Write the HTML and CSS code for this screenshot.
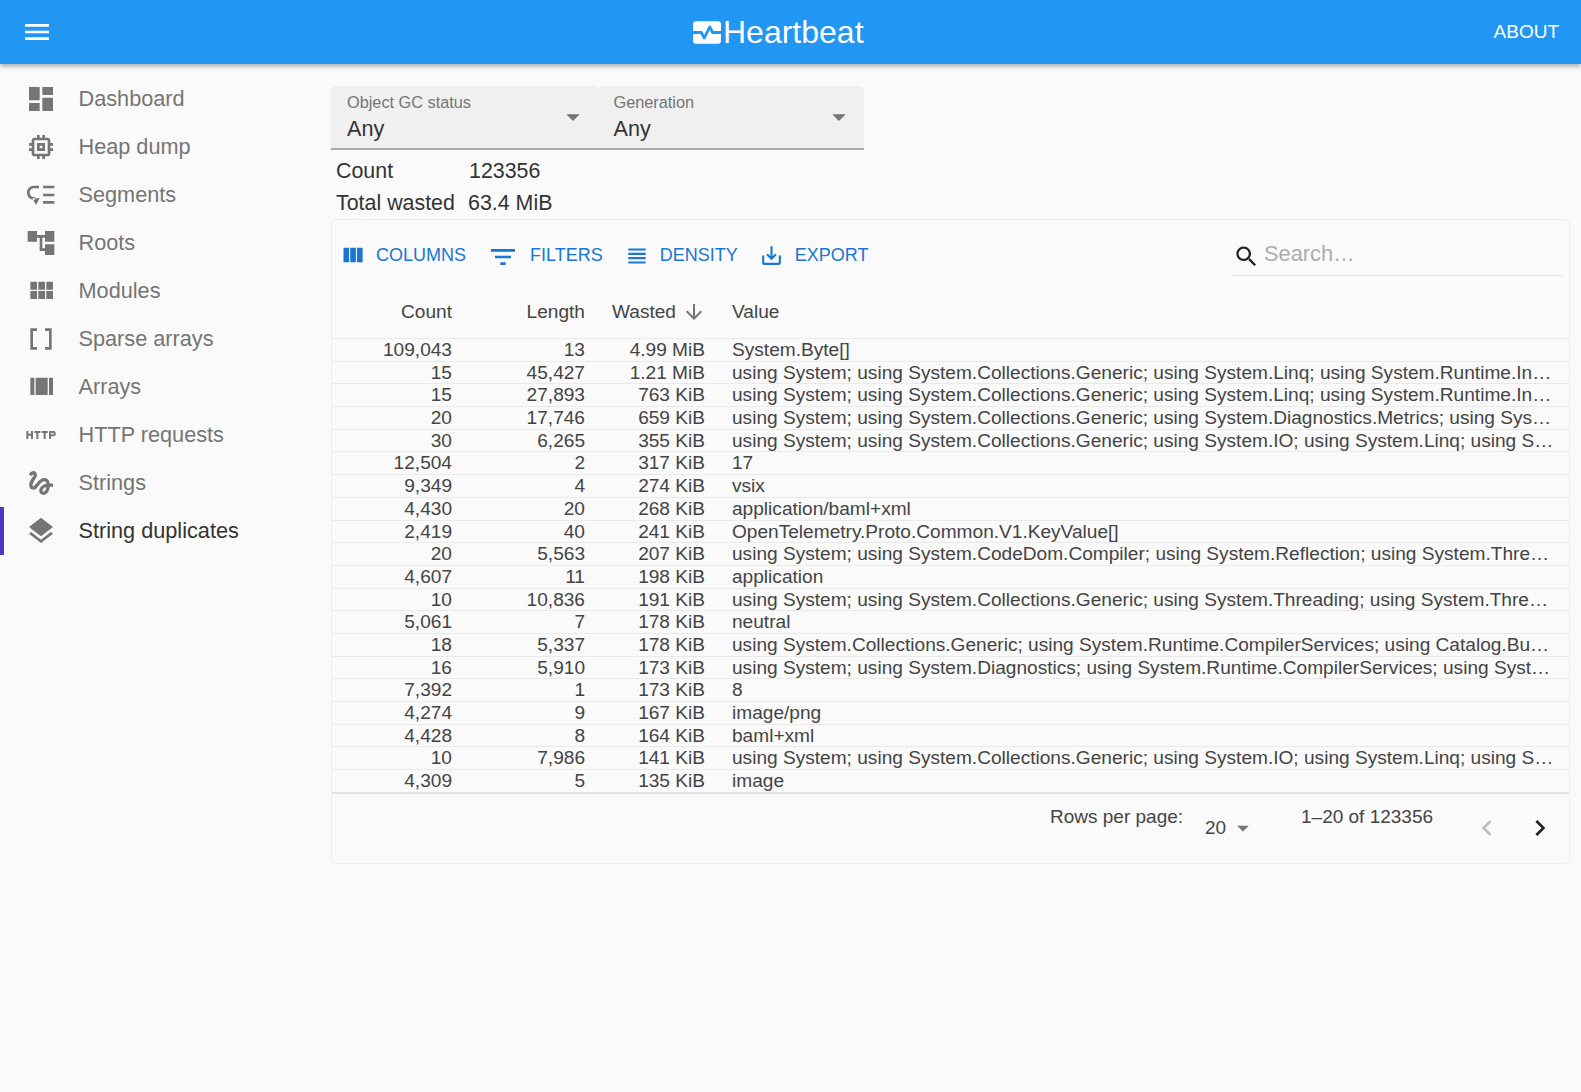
FILE: index.html
```html
<!DOCTYPE html>
<html lang="en">
<head>
    <meta charset="UTF-8">
    <title>Heartbeat</title>
    <link rel="stylesheet" href="styles.css">
</head>
<body>
    <header class="app-bar">
        <svg class="menu-icon" viewBox="0 0 24 24"><path d="M3 18h18v-2H3v2zm0-5h18v-2H3v2zm0-7v2h18V6H3z"/></svg>
        <div class="brand">
            <svg class="brand-icon" viewBox="2 4 20 16"><path d="M15.11 12.45L14 10.24l-3.11 6.21c-.16.34-.51.55-.89.55s-.73-.21-.89-.55L7.38 13H2v5c0 1.1.9 2 2 2h16c1.1 0 2-.9 2-2v-5h-6c-.38 0-.73-.21-.89-.55zM20 4H4c-1.1 0-2 .9-2 2v5h6c.38 0 .73.21.89.55L10 13.76l3.11-6.21c.34-.68 1.45-.68 1.79 0L16.62 11H22V6c0-1.1-.9-2-2-2z"/></svg>
            <span>Heartbeat</span>
        </div>
        <span class="about">ABOUT</span>
    </header>

    <div class="layout">
        <nav class="sidebar">
            <a class="nav-item"><svg viewBox="0 0 24 24"><path d="M3 13h8V3H3v10zm0 8h8v-6H3v6zm10 0h8V11h-8v10zm0-18v6h8V3h-8z"/></svg>Dashboard</a>
            <a class="nav-item"><svg viewBox="0 0 24 24"><path d="M15 9H9v6h6V9zm-2 4h-2v-2h2v2zm8-2V9h-2V7c0-1.1-.9-2-2-2h-2V3h-2v2h-2V3H9v2H7c-1.1 0-2 .9-2 2v2H3v2h2v2H3v2h2v2c0 1.1.9 2 2 2h2v2h2v-2h2v2h2v-2h2c1.1 0 2-.9 2-2v-2h2v-2h-2v-2h2zm-4 6H7V7h10v10z"/></svg>Heap dump</a>
            <a class="nav-item"><svg viewBox="0 0 24 24"><path d="M10.500 5H6.500C3.600 5 1.500 7.300 1.500 10.300S3.600 15.500 6.500 15.500H7.500V13.500H6.500C4.800 13.500 3.500 12.100 3.500 10.300S4.800 7 6.500 7H10.500zM5.500 14.500h5.500l-2.750 5zM13.500 5h8.500v2h-8.500zM13.500 11h8.500v2h-8.500zM13.500 16.500h8.500v2h-8.500z"/></svg>Segments</a>
            <a class="nav-item"><svg viewBox="0 0 24 24"><path d="M22 11V3h-7v3H9V3H2v8h7V8h2v10h4v3h7v-8h-7v3h-2V8h2v3z"/></svg>Roots</a>
            <a class="nav-item"><svg viewBox="0 0 24 24"><path d="M4 11h5V5H4v6zm0 7h5v-6H4v6zm6 0h5v-6h-5v6zm6 0h5v-6h-5v6zm-6-7h5V5h-5v6zm6-6v6h5V5h-5z"/></svg>Modules</a>
            <a class="nav-item"><svg viewBox="0 0 24 24"><path d="M15 4v2h3v12h-3v2h5V4zM4 20h5v-2H6V6h3V4H4z"/></svg>Sparse arrays</a>
            <a class="nav-item"><svg viewBox="0 0 24 24"><path d="M4 18h3V5H4v13zM18 5v13h3V5h-3zM8 18h9V5H8v13z"/></svg>Arrays</a>
            <a class="nav-item"><svg viewBox="0 0 24 24"><path d="M4.500 11h-2V9H1v6h1.500v-2.500h2V15H6V9H4.500v2zm2.500-.5h1.500V15H10v-4.500h1.500V9H7v1.500zm5.500 0H14V15h1.500v-4.500H17V9h-4.500v1.500zm9-1.500H18v6h1.500v-2h2c.8 0 1.500-.7 1.500-1.500v-1c0-.8-.7-1.500-1.500-1.500zm0 2.500h-2v-1h2v1z"/></svg>HTTP requests</a>
            <a class="nav-item"><svg viewBox="0 0 24 24"><path d="M4.590 6.890c.7-.71 1.400-1.350 1.710-1.220.5.2 0 1.030-.3 1.520-.25.42-2.860 3.890-2.860 6.310 0 1.280.48 2.340 1.340 2.980.75.56 1.740.73 2.640.46 1.070-.31 1.950-1.400 3.060-2.770 1.210-1.490 2.830-3.440 4.080-3.440 1.630 0 1.650 1.010 1.760 1.790-3.780.64-5.380 3.670-5.380 5.370 0 1.700 1.440 3.090 3.210 3.090 1.630 0 4.290-1.330 4.690-6.100H21v-2.500h-2.470c-.15-1.650-1.090-4.200-4.030-4.200-2.250 0-4.180 1.910-4.940 2.840-.58.73-2.060 2.480-2.290 2.720-.25.3-.68.84-1.110.84-.45 0-.72-.83-.36-1.920.35-1.090 1.400-2.860 1.850-3.520.78-1.140 1.300-1.920 1.300-3.280C8.950 3.690 7.310 3 6.440 3 5.120 3 3.970 4 3.720 4.250c-.36.36-.66.66-.88.93l1.750 1.710zm9.290 11.660c-.31 0-.74-.26-.74-.72 0-.6.73-2.200 2.870-2.760-.3 2.690-1.430 3.480-2.130 3.480z"/></svg>Strings</a>
            <a class="nav-item active"><svg viewBox="0 0 24 24"><path d="M11.990 18.540l-7.370-5.730L3 14.070l9 7 9-7-1.630-1.270-7.380 5.740zM12 16l7.360-5.730L21 9l-9-7-9 7 1.630 1.270L12 16z"/></svg>String duplicates</a>
        </nav>

        <main class="content">
            <div class="filters">
                <div class="select">
                    <div class="select-label">Object GC status</div>
                    <div class="select-value">Any</div>
                    <svg class="select-arrow" viewBox="0 0 24 24"><path d="M7 10l5 5 5-5z"/></svg>
                </div>
                <div class="select">
                    <div class="select-label">Generation</div>
                    <div class="select-value">Any</div>
                    <svg class="select-arrow" viewBox="0 0 24 24"><path d="M7 10l5 5 5-5z"/></svg>
                </div>
            </div>

            <div class="stats">
                <span>Count</span><span class="stat-count">123356</span>
                <span>Total wasted</span><span>63.4 MiB</span>
            </div>

            <section class="grid-card">
                <div class="toolbar">
                    <a class="tool tool-columns"><svg viewBox="0 0 24 24"><path d="M10 18h5V5h-5v13zm-6 0h5V5H4v13zM16 5v13h5V5h-5z"/></svg>COLUMNS</a>
                    <a class="tool tool-filters"><svg viewBox="0 0 24 24"><path d="M10 18h4v-2h-4v2zM3 6v2h18V6H3zm3 7h12v-2H6v2z"/></svg>FILTERS</a>
                    <a class="tool tool-density"><svg viewBox="0 0 24 24"><path d="M4 15h16v-2H4v2zm0 4h16v-2H4v2zm0-8h16V9H4v2zm0-6v2h16V5H4z"/></svg>DENSITY</a>
                    <a class="tool tool-export"><svg viewBox="0 0 24 24"><path d="M19 12v7H5v-7H3v7c0 1.100.9 2 2 2h14c1.100 0 2-.9 2-2v-7h-2zm-6 .67l2.590-2.580L17 11.500l-5 5-5-5 1.410-1.410L11 12.670V3h2z"/></svg>EXPORT</a>
                    <div class="search">
                        <svg viewBox="0 0 24 24"><path d="M15.500 14h-.79l-.28-.27C15.410 12.590 16 11.110 16 9.500 16 5.910 13.090 3 9.500 3S3 5.910 3 9.500 5.910 16 9.500 16c1.610 0 3.090-.59 4.230-1.570l.27.28v.79l5 4.990L20.490 19l-4.990-5zm-6 0C7.010 14 5 11.990 5 9.500S7.010 5 9.500 5 14 7.010 14 9.500 11.990 14 9.500 14z"/></svg>
                        <span>Search…</span>
                    </div>
                </div>

                <div class="row head">
                    <span class="num">Count</span>
                    <span class="num">Length</span>
                    <span class="sorted">Wasted<svg viewBox="0 0 24 24"><path d="M20 12l-1.410-1.410L13 16.170V4h-2v12.170l-5.580-5.590L4 12l8 8 8-8z"/></svg></span>
                    <span class="val">Value</span>
                </div>
                <div class="row"><span class="num">109,043</span><span class="num">13</span><span class="num">4.99 MiB</span><span class="val">System.Byte[]</span></div>
                <div class="row"><span class="num">15</span><span class="num">45,427</span><span class="num">1.21 MiB</span><span class="val">using System; using System.Collections.Generic; using System.Linq; using System.Runtime.In…</span></div>
                <div class="row"><span class="num">15</span><span class="num">27,893</span><span class="num">763 KiB</span><span class="val">using System; using System.Collections.Generic; using System.Linq; using System.Runtime.In…</span></div>
                <div class="row"><span class="num">20</span><span class="num">17,746</span><span class="num">659 KiB</span><span class="val">using System; using System.Collections.Generic; using System.Diagnostics.Metrics; using Sys…</span></div>
                <div class="row"><span class="num">30</span><span class="num">6,265</span><span class="num">355 KiB</span><span class="val">using System; using System.Collections.Generic; using System.IO; using System.Linq; using S…</span></div>
                <div class="row"><span class="num">12,504</span><span class="num">2</span><span class="num">317 KiB</span><span class="val">17</span></div>
                <div class="row"><span class="num">9,349</span><span class="num">4</span><span class="num">274 KiB</span><span class="val">vsix</span></div>
                <div class="row"><span class="num">4,430</span><span class="num">20</span><span class="num">268 KiB</span><span class="val">application/baml+xml</span></div>
                <div class="row"><span class="num">2,419</span><span class="num">40</span><span class="num">241 KiB</span><span class="val">OpenTelemetry.Proto.Common.V1.KeyValue[]</span></div>
                <div class="row"><span class="num">20</span><span class="num">5,563</span><span class="num">207 KiB</span><span class="val">using System; using System.CodeDom.Compiler; using System.Reflection; using System.Thre…</span></div>
                <div class="row"><span class="num">4,607</span><span class="num">11</span><span class="num">198 KiB</span><span class="val">application</span></div>
                <div class="row"><span class="num">10</span><span class="num">10,836</span><span class="num">191 KiB</span><span class="val">using System; using System.Collections.Generic; using System.Threading; using System.Thre…</span></div>
                <div class="row"><span class="num">5,061</span><span class="num">7</span><span class="num">178 KiB</span><span class="val">neutral</span></div>
                <div class="row"><span class="num">18</span><span class="num">5,337</span><span class="num">178 KiB</span><span class="val">using System.Collections.Generic; using System.Runtime.CompilerServices; using Catalog.Bu…</span></div>
                <div class="row"><span class="num">16</span><span class="num">5,910</span><span class="num">173 KiB</span><span class="val">using System; using System.Diagnostics; using System.Runtime.CompilerServices; using Syst…</span></div>
                <div class="row"><span class="num">7,392</span><span class="num">1</span><span class="num">173 KiB</span><span class="val">8</span></div>
                <div class="row"><span class="num">4,274</span><span class="num">9</span><span class="num">167 KiB</span><span class="val">image/png</span></div>
                <div class="row"><span class="num">4,428</span><span class="num">8</span><span class="num">164 KiB</span><span class="val">baml+xml</span></div>
                <div class="row"><span class="num">10</span><span class="num">7,986</span><span class="num">141 KiB</span><span class="val">using System; using System.Collections.Generic; using System.IO; using System.Linq; using S…</span></div>
                <div class="row last"><span class="num">4,309</span><span class="num">5</span><span class="num">135 KiB</span><span class="val">image</span></div>

                <div class="pager">
                    <span class="pager-label">Rows per page:</span>
                    <span class="pager-size">20<svg viewBox="0 0 24 24"><path d="M7 10l5 5 5-5z"/></svg></span>
                    <span class="pager-range">1–20 of 123356</span>
                    <svg class="pager-prev" viewBox="0 0 24 24"><path d="M15.410 16.590L10.830 12l4.580-4.590L14 6l-6 6 6 6 1.410-1.410z"/></svg>
                    <svg class="pager-next" viewBox="0 0 24 24"><path d="M8.590 16.590L13.170 12 8.590 7.410 10 6l6 6-6 6-1.410-1.410z"/></svg>
                </div>
            </section>
        </main>
    </div>
</body>
</html>
```

FILE: styles.css
```css
* {
    box-sizing: border-box;
}
body {
    margin: 0;
    background-color: #fafafa;
    color: #333;
    font-family: "Liberation Sans", Arial, sans-serif;
    font-size: 20px;
}
.app-bar {
    position: relative;
    height: 64px;
    display: flex;
    align-items: center;
    justify-content: space-between;
    padding: 0 22px 0 21px;
    background-color: #2196f3;
    color: #fff;
    box-shadow: 0 2px 5px rgba(0, 0, 0, 0.35);
}
.menu-icon {
    width: 32px;
    height: 32px;
    fill: #fff;
}
.brand {
    display: flex;
    align-items: center;
    gap: 2px;
    font-size: 32px;
    margin-left: 10px;
}
.brand-icon {
    width: 28px;
    height: 23px;
    fill: #fff;
}
.about {
    font-size: 19px;
}
.layout {
    display: flex;
}
.sidebar {
    width: 331px;
    flex-shrink: 0;
    padding-top: 11px;
}
.nav-item {
    height: 48px;
    display: flex;
    align-items: center;
    gap: 21.5px;
    padding-left: 25px;
    color: #757575;
    font-size: 21.7px;
}
.nav-item svg {
    width: 32px;
    height: 32px;
    fill: #757575;
    flex-shrink: 0;
}
.nav-item.active {
    color: #333;
    box-shadow: inset 4px 0 0 #5035c8;
}
.content {
    flex: 1;
    padding: 22px 11px 0 0;
}
.filters {
    display: flex;
    width: 533px;
    height: 64px;
    border-bottom: 2px solid #a8a8a8;
}
.select {
    position: relative;
    width: 50%;
    padding: 7px 16px;
    background-color: #f0f0f0;
    border-radius: 5px 5px 0 0;
}
.select-label {
    font-size: 16.3px;
    color: #757575;
}
.select-value {
    margin-top: 4px;
    font-size: 21.6px;
}
.select-arrow {
    position: absolute;
    top: 15px;
    right: 9px;
    width: 32px;
    height: 32px;
    fill: #757575;
}
.stats {
    display: grid;
    grid-template-columns: 132px auto;
    justify-content: start;
    row-gap: 8px;
    padding: 9px 0 0 5px;
    font-size: 21.4px;
    line-height: 24px;
}
.stat-count {
    margin-left: 1px;
}
.grid-card {
    height: 645px;
    margin-top: 4px;
    border: 1px solid #eee;
    border-radius: 5px;
}
.toolbar {
    height: 76px;
    padding-bottom: 5px;
    display: flex;
    align-items: center;
}
.tool {
    display: flex;
    align-items: center;
    font-size: 18px;
    color: #1976d2;
}
.tool svg {
    fill: #1976d2;
    flex-shrink: 0;
}
.tool-columns {
    margin-left: 7px;
    gap: 10px;
}
.tool-columns svg {
    width: 27px;
    height: 27px;
}
.tool-filters {
    margin-left: 21px;
    gap: 11px;
}
.tool-filters svg {
    width: 32px;
    height: 32px;
    margin-top: 2px;
}
.tool-density {
    margin-left: 21px;
    gap: 10px;
}
.tool-density svg {
    width: 26px;
    height: 26px;
    margin-top: 1px;
}
.tool-export {
    margin-left: 21px;
    gap: 11px;
}
.tool-export svg {
    width: 25px;
    height: 25px;
}
.search {
    display: flex;
    align-items: center;
    gap: 4px;
    width: 332px;
    height: 40px;
    margin-left: auto;
    margin-right: 6px;
    margin-top: 0;
    padding-left: 2px;
    border-bottom: 1px solid #e4e4e4;
    color: #adadad;
    font-size: 21.8px;
}
.search svg {
    width: 27px;
    height: 27px;
    fill: #222;
    margin-top: 3px;
}
.search span {
    padding-bottom: 3px;
}
.row {
    display: grid;
    grid-template-columns: 130px 133px 120px 1fr;
    align-items: center;
    height: 22.7px;
    border-bottom: 1px solid #eaeaea;
    font-size: 19.1px;
    color: #444;
    white-space: nowrap;
}
.row.head {
    height: 43px;
    padding-bottom: 10px;
}
.row.last {
    height: 23.7px;
    border-bottom: 2px solid #e4e4e4;
}
.num {
    padding-right: 10px;
    text-align: right;
}
.val {
    padding-left: 17px;
    overflow: hidden;
}
.sorted {
    display: flex;
    align-items: center;
    justify-content: flex-end;
    gap: 6px;
    padding-right: 9px;
}
.sorted svg {
    width: 24px;
    height: 24px;
    fill: #757575;
}
.pager {
    position: relative;
    height: 67px;
    font-size: 19px;
    color: #444;
}
.pager-label,
.pager-size,
.pager-range,
.pager-prev,
.pager-next {
    position: absolute;
}
.pager-label {
    top: 12px;
    left: 718px;
}
.pager-size {
    display: flex;
    align-items: center;
    top: 20px;
    left: 873px;
}
.pager-size svg {
    width: 28px;
    height: 28px;
    fill: #757575;
    margin-left: 3px;
}
.pager-range {
    top: 12px;
    left: 969px;
}
.pager-prev {
    top: 18px;
    left: 1139px;
    width: 32px;
    height: 32px;
    fill: #bdbdbd;
}
.pager-next {
    top: 18px;
    left: 1192px;
    width: 32px;
    height: 32px;
    fill: #222;
}
```
